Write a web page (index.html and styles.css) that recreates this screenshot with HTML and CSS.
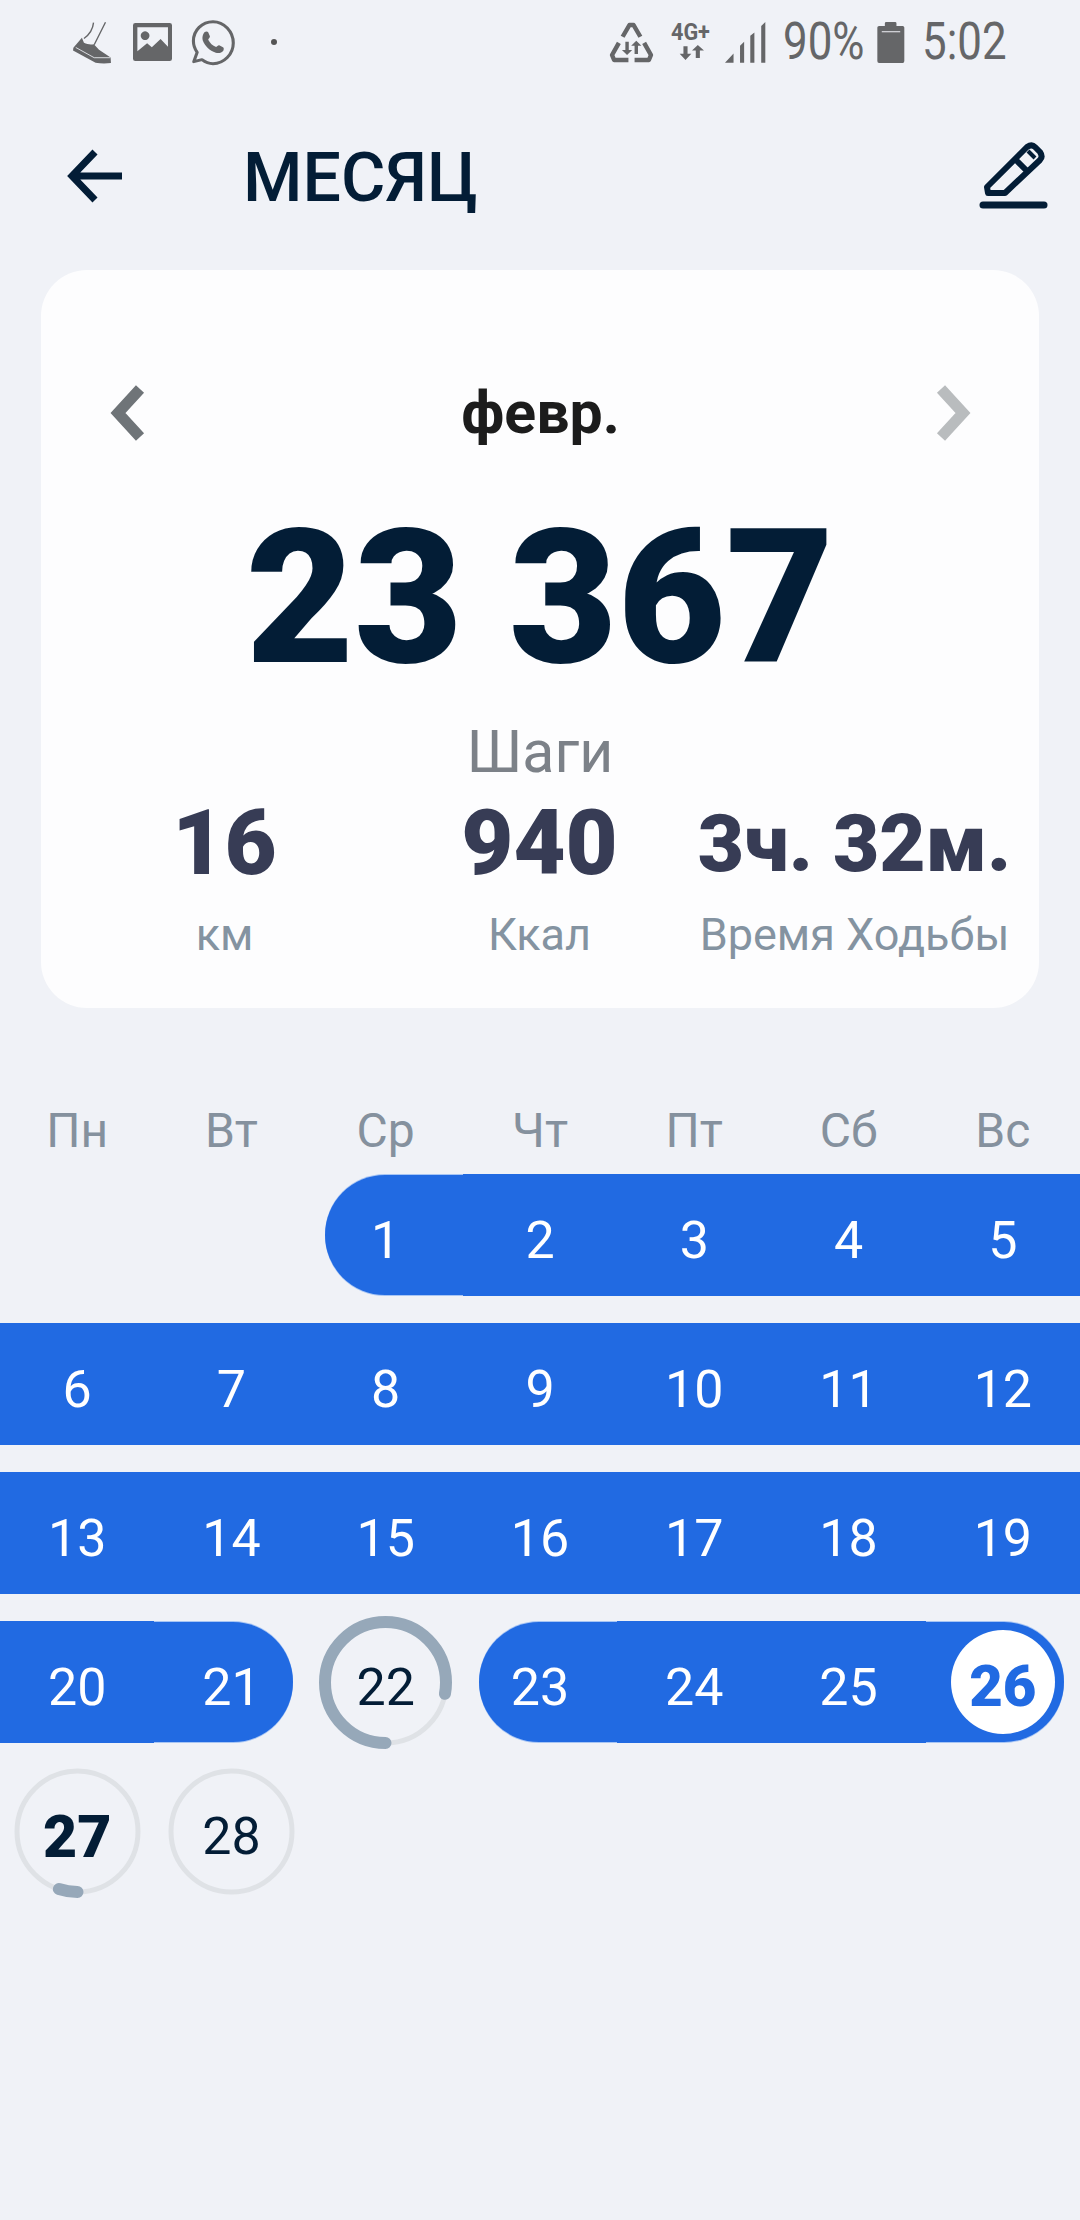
FILE: index.html
```html
<!DOCTYPE html>
<html lang="ru">
<head>
<meta charset="utf-8">
<title>Месяц</title>
<link rel="stylesheet" href="styles.css">
</head>
<body>
<div class="status">
  <div class="status-left">
    <svg class="i-shoe" viewBox="205 60 120 130" preserveAspectRatio="none"><path class="thin" d="M268 65c-2 22-12 36-28 48M303 64l-33 68"/><path class="solid" d="M234 111l6 15c10 5 20 6 29 4l15 17 22 15 12 8 1 17c-15 2-30 2-45-1l-66-37 1-8z"/><path class="cut" d="M216 140l54 31h47"/></svg>
    <svg class="i-img" viewBox="382 66 116 114" preserveAspectRatio="none"><path class="solid" fill-rule="evenodd" d="M389 66h102q7 0 7 7v100q0 7-7 7H389q-7 0-7-7V73q0-7 7-7zM395 79v72l29-24 14 12 26-25 22 23V79zM418 91a13 13 0 1 1-.1 0z"/></svg>
    <svg class="i-wa" viewBox="553 58 128 132" preserveAspectRatio="none"><path class="line" d="M617 63c-32 0-57 26-57 58 0 13 4 24 11 34l-10 28 24-6c10 8 20 12 32 12 32 0 59-28 59-62s-27-64-59-64z"/><path class="solid" d="M592 95c4-3 9-3 11 0l5 12c1 3-4 7-5 10 5 10 13 18 23 22 3-1 6-6 9-5l11 6c3 2 3 6 1 10-5 7-14 9-22 6-18-6-31-19-38-37-2-9 0-18 5-24z"/></svg>
    <span class="dot"></span>
  </div>
  <div class="status-right">
    <svg class="i-rec" viewBox="207 66 126 116" preserveAspectRatio="none"><path class="tri" d="M244 107l20-35h12l20 35M233 125l-20 36 6 15h42M307 125l20 36-6 15h-42"/><path class="solid" d="M252 122h10v24h10l-15 15-15-15h10zM279 158h10v-24h10l-15-15-15 15h10z"/></svg>
    <div class="net"><span class="net-t">4G+</span><svg class="i-arr" viewBox="408 142 76 44" preserveAspectRatio="none"><path class="solid" d="M421 146h12v22h11l-17 18-17-18h11zM457 180h12v-22h12l-18-16-17 16h11z"/></svg></div>
    <svg class="i-sig" viewBox="540 64 120 122" preserveAspectRatio="none"><path class="solid" d="M540 185l25-27v27zM584 185v-50l12-12v62zM614 185v-80l12-10v90zM646 185V76l12-12v121z"/></svg>
    <span class="st-text st-pct">90%</span>
    <svg class="i-bat" viewBox="980 62 82 124" preserveAspectRatio="none"><path class="solid" fill-rule="evenodd" d="M1003 66q0-4 4-4h26q4 0 4 4v8h18q5 0 5 5v101q0 6-5 6H986q-5 0-5-6V79q0-5 5-5h17zM994 90v3h54v-3z"/></svg>
    <span class="st-text st-time">5:02</span>
  </div>
</div>

<header class="topbar">
  <svg class="i-back" viewBox="0 0 54 54"><path d="M54 27H5M27 3L4 27l23 24"/></svg>
  <h1 class="title">МЕСЯЦ</h1>
  <svg class="i-edit" viewBox="0 0 67 66"><path class="pen" d="M7 44L40 11l7-7c3-2 6-2 8 0l5 5c2 3 2 6 0 8L25 50H8zM35 16l13 13"/><path class="pen-tip" d="M48 8l7 7"/><path class="pen-line" d="M3 62h61"/></svg>
</header>

<section class="card">
  <div class="month">
    <svg class="chev" viewBox="0 0 33 54"><path class="chev-dark" d="M29 3L7 27l22 24" /></svg>
    <div class="month-name">февр.</div>
    <svg class="chev" viewBox="0 0 33 54"><path class="chev-light" d="M4 3l22 24L4 51"/></svg>
  </div>
  <div class="total">23 367</div>
  <div class="steps">Шаги</div>
  <div class="stats">
    <div class="stat"><div class="stat-val">16</div><div class="stat-lab">км</div></div>
    <div class="stat"><div class="stat-val">940</div><div class="stat-lab">Ккал</div></div>
    <div class="stat"><div class="stat-val stat-small">3ч. 32м.</div><div class="stat-lab">Время Ходьбы</div></div>
  </div>
</section>

<div class="weekdays">
  <span>Пн</span><span>Вт</span><span>Ср</span><span>Чт</span><span>Пт</span><span>Сб</span><span>Вс</span>
</div>

<div class="calendar">
  <div class="day"></div><div class="day"></div>
  <div class="day on cap-l">1</div><div class="day on">2</div><div class="day on">3</div><div class="day on">4</div><div class="day on">5</div>
  <div class="day on">6</div><div class="day on">7</div><div class="day on">8</div><div class="day on">9</div><div class="day on">10</div><div class="day on">11</div><div class="day on">12</div>
  <div class="day on">13</div><div class="day on">14</div><div class="day on">15</div><div class="day on">16</div><div class="day on">17</div><div class="day on">18</div><div class="day on">19</div>
  <div class="day on">20</div><div class="day on cap-r">21</div>
  <div class="day">22<svg class="ring" viewBox="0 0 133 133"><circle class="track" cx="66.5" cy="66.5" r="60.5"/><circle class="prog" cx="66.5" cy="66.5" r="60.5" pathLength="100" stroke-dasharray="78 100"/></svg></div>
  <div class="day on cap-l">23</div><div class="day on">24</div><div class="day on">25</div>
  <div class="day on cap-r today-cell"><span class="today">26</span></div>
  <div class="day day-bold">27<svg class="ring" viewBox="0 0 133 133"><circle class="track" cx="66.5" cy="66.5" r="60.5"/><circle class="prog" cx="66.5" cy="66.5" r="60.5" pathLength="100" stroke-dasharray="5 100"/></svg></div>
  <div class="day">28<svg class="ring" viewBox="0 0 133 133"><circle class="track" cx="66.5" cy="66.5" r="60.5"/></svg></div>
</div>
</body>
</html>
```
FILE: styles.css
```css
* { box-sizing: border-box; margin: 0; padding: 0; }
html, body { width: 1080px; height: 2220px; overflow: hidden; }
body { background: #f0f2f7; font-family: Roboto, "Liberation Sans", sans-serif; color: #031d36; }

svg { display: block; flex: none; overflow: visible; }
.solid { fill: #656668; stroke: none; }
.thin { fill: none; stroke: #656668; stroke-width: 4; }
.line { fill: none; stroke: #656668; stroke-width: 9; stroke-linejoin: round; }
.cut { fill: none; stroke: #f0f2f7; stroke-width: 2.5; }
.tri { fill: none; stroke: #656668; stroke-width: 13; stroke-linejoin: round; }

/* status bar */
.status { height: 82px; padding-top: 20px; display: flex; justify-content: space-between; }
.status-left { display: flex; align-items: center; height: 44px; padding-left: 72px; }
.status-right { display: flex; align-items: center; height: 44px; padding-right: 75px; }
.i-shoe { width: 41px; height: 43px; }
.i-img { width: 39px; height: 38px; margin-left: 20px; }
.i-wa { width: 44px; height: 44px; margin-left: 19px; }
.dot { width: 6px; height: 6px; border-radius: 50%; background: #555; margin-left: 36px; }
.i-rec { width: 43px; height: 39px; }
.net { width: 42px; margin-left: 18px; height: 40px; position: relative; }
.net-t { display: block; font-size: 24px; font-weight: 700; line-height: 20px; color: #656668; transform: scaleX(.9); transform-origin: left; white-space: nowrap; }
.i-arr { width: 26px; height: 15px; margin: 3px 0 0 8px; }
.i-sig { width: 41px; height: 41px; margin-left: 12px; }
.st-text { font-size: 51px; line-height: 44px; color: #656668; transform: scaleX(.86); transform-origin: left; white-space: nowrap; }
.st-pct { width: 79px; margin-left: 17px; }
.i-bat { width: 28px; height: 41px; margin-left: 15px; }
.st-time { width: 83px; margin-left: 17px; }

/* top bar */
.topbar { height: 188px; padding: 39px 33px 0 68px; display: flex; align-items: flex-start; }
.i-back { width: 54px; height: 54px; margin-top: 28px; }
.i-back path { fill: none; stroke: #031d36; stroke-width: 7; }
.title { font-size: 68px; font-weight: 500; line-height: 114px; margin-left: 121px; flex: 1; }
.i-edit { width: 67px; height: 66px; margin-top: 22px; }
.pen { fill: none; stroke: #031d36; stroke-width: 6; stroke-linejoin: round; }
.pen-tip { fill: none; stroke: #031d36; stroke-width: 4; }
.pen-line { fill: none; stroke: #031d36; stroke-width: 7; stroke-linecap: round; }

/* summary card */
.card { width: 998px; height: 738px; margin-left: 41px; background: #fdfdfe; border-radius: 46px; padding: 116px 26px 0; }
.month { height: 54px; padding: 0 43px 0 44px; display: flex; justify-content: space-between; align-items: center; }
.chev { width: 33px; height: 54px; }
.chev path { fill: none; stroke-width: 11; }
.chev-dark { stroke: #6f7478; }
.chev-light { stroke: #b9bcbe; }
.month-name { font-size: 59px; font-weight: 700; color: #1c1c1c; line-height: 54px; }
.total { font-size: 187px; font-weight: 900; line-height: 200px; text-align: center; margin-top: 59px; }
.steps { font-size: 59px; line-height: 60px; text-align: center; color: #7c8188; margin-top: 23px; }
.stats { display: grid; grid-template-columns: repeat(3, 315px); margin-top: 17px; }
.stat { text-align: center; white-space: nowrap; }
.stat-val { font-size: 90px; font-weight: 900; line-height: 90px; color: #373c55; }
.stat-small { font-size: 80px; }
.stat-lab { font-size: 45px; line-height: 50px; color: #8493a1; margin-top: 21px; }

/* calendar */
.weekdays { display: grid; grid-template-columns: repeat(7, 1fr); margin-top: 98px; height: 50px; text-align: center; font-size: 48px; line-height: 50px; color: #85919e; }
.calendar { display: grid; grid-template-columns: repeat(7, 1fr); grid-auto-rows: 122px; row-gap: 27px; margin-top: 18px; }
.day { position: relative; display: flex; align-items: center; justify-content: center; font-size: 52px; color: #031d36; padding-top: 10px; }
.day.on { color: #fff; background: #216ae2; }
.cap-l, .cap-r { background: none !important; }
.cap-l::before, .cap-r::before { content: ""; position: absolute; top: 1px; bottom: 1px; background: #216ae2; box-shadow: 0 -1px 0 #a7c5f4, 0 1px 0 #a7c5f4; z-index: -1; }
.cap-l::before { left: 16px; right: 0; border-radius: 60px 0 0 60px; }
.cap-r::before { left: 0; right: 16px; border-radius: 0 60px 60px 0; }
.day-bold { font-size: 59px; font-weight: 900; padding-top: 10px; }
.today-cell { padding-top: 0; }
.today { width: 104px; height: 104px; border-radius: 50%; background: #fff; color: #216ae2; font-size: 58px; font-weight: 900; display: flex; align-items: center; justify-content: center; padding-top: 8px; }
.ring { position: absolute; left: 50%; top: 50%; width: 133px; height: 133px; margin: -66.5px 0 0 -66.5px; transform: rotate(90deg); }
.ring circle { fill: none; }
.track { stroke: #dfe2e6; stroke-width: 5; }
.prog { stroke: #96a8b9; stroke-width: 12; stroke-linecap: round; }
```
